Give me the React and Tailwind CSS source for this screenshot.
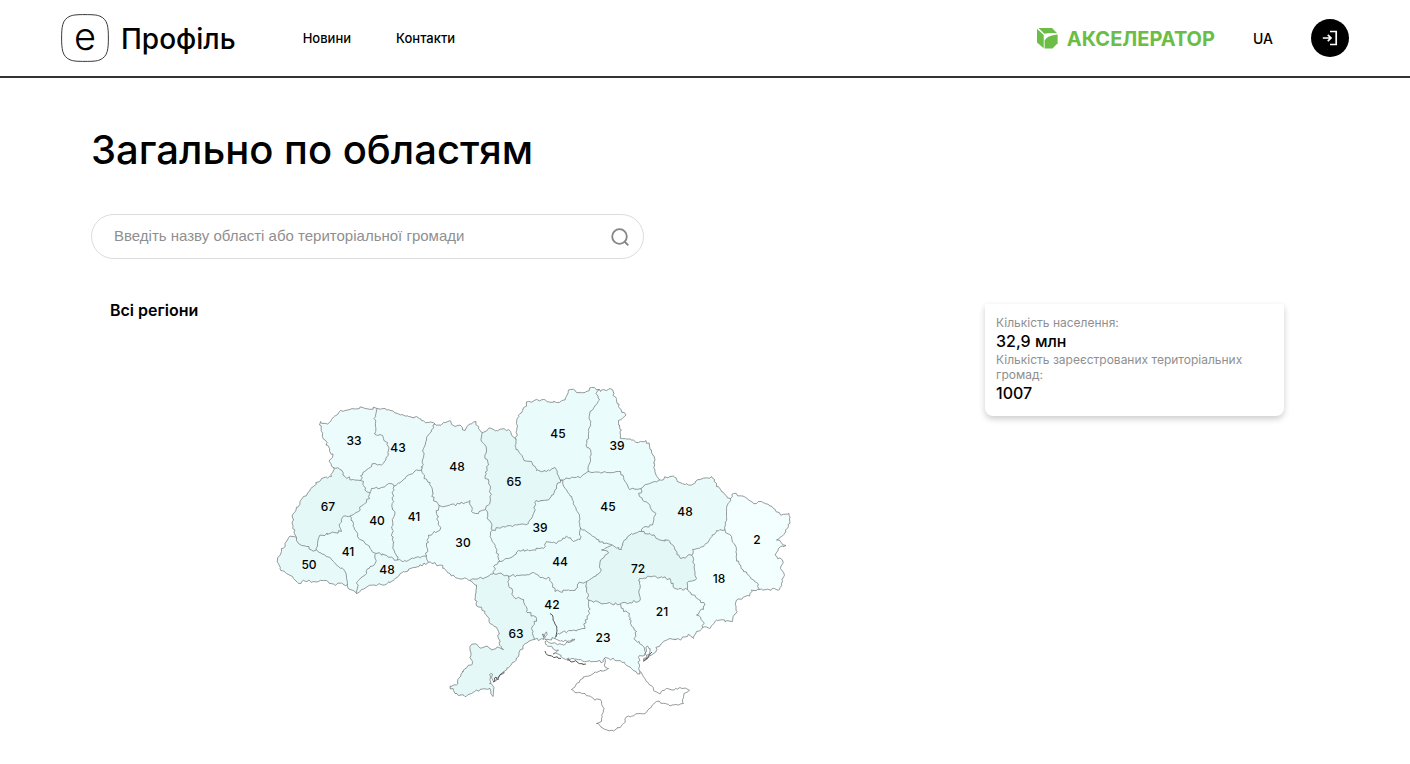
import React from "react";

const arcs = {
  volOut: "377,408.5 363,407.5 350,409.5 340.5,410.5 338,414 331.5,419.5 327.5,424 320.5,421.5 319.5,425 321.5,431.5 325,440 329.5,448.5 332.5,457.5 329.5,460 333.5,467.5",
  volLvi: "333.5,467.5 340,469.5 345,476.5 353.5,479.5 360.5,480.5",
  volRiv: "377,408.5 374,418.5 375.5,426.5 374.5,434 380,434.5 383.5,438.5 387.5,442.5 388.5,450 386,458 381.5,465 375,463.5 368.5,468.5 362.5,475 360.5,480.5",
  rivOut: "377,408.5 386.5,410 398.5,414 408.5,416.5 416.5,416.5 421.5,420.5 428.5,422.5 435,424",
  rivZhy: "435,424 431.5,430 426.5,440 423.5,448.5 422.5,460 421.5,470",
  rivKhm: "421.5,470 416.5,470 408.5,475 401.5,481.5 394,486",
  rivTer: "394,486 390,483.5 381.5,487.5 371.5,488.5 370,493",
  rivLvi: "360.5,480.5 363.5,481.5 365,490 370,493",
  lviTer: "370,493 369.5,498.5 361.5,506 358.5,511.5 350,516",
  lviIva: "350,516 343.5,516 339.5,526.5 341.5,531.5 330,533.5 320,535 317.5,543.5 316.5,550",
  lviOut: "333.5,467.5 331.5,476.5 321.5,478.5 313.5,486.5 303.5,496.5 293.5,513.5 292.5,521.5 294,532 296.5,537.5",
  lviZak: "296.5,537.5 298.5,543.5 306.5,546.5 311.5,550 316.5,550",
  zakOut: "296.5,537.5 290,536 285,543.5 281.5,551.5 277.5,560 280,568.5 286.5,573.5 295,580 298.5,583.5 303.5,580 313.5,581.5 323.5,580.5 333.5,584 347.5,584.5",
  zakIva: "316.5,550 320,552.5 326.5,556.5 333.5,561.5 338.5,566.5 345,571.5 346.5,578.5 347.5,584.5",
  ivaOut: "347.5,584.5 350,589.5 356.5,593.5",
  ivaChv: "356.5,593.5 357.5,581.5 366.5,573.5 370,566.5 375,563.5 376,553.5",
  ivaTer: "350,516 353.5,523.5 357.5,536.5 365,543.5 370,548.5 376,553.5",
  terChv: "376,553.5 385,555 393.5,558.5 397.5,560",
  khmTer: "394,486 392.5,500 394,516.5 392,533.5 394,550 397.5,560",
  chvKhm: "397.5,560 403.5,561.5 413.5,558.5 426.5,556",
  chvOut: "356.5,593.5 361.5,589.5 373.5,585 386.5,584 395,578.5 403.5,571.5 415,567.5 428.5,562.5",
  chvVin: "426.5,556 428.5,562.5",
  khmZhy: "421.5,470 424,478.5 430,482.5 432.5,490 433.5,500 439,505.5",
  khmVin: "439,505.5 436.5,513.5 438.5,521.5 440,530 428.5,535 426.5,546.5 426.5,556",
  zhyOut: "435,424 440,425 450,420.5 455,426.5 460,425 465,430.5 470,424 476,421.5 478.5,428.5 482.5,432.5",
  zhyKyi: "482.5,432.5 481.5,441.5 486.5,450 485,458.5 488.5,465 485,476.5 490.5,486.5 490.5,500 485.5,509.5",
  zhyVin: "439,505.5 446.5,506 460,504 470,500.5 471.5,511.5 478.5,513.5 485.5,509.5",
  vinKyi: "485.5,509.5 488.5,520 492.5,530",
  kyiOut: "482.5,432.5 488.5,428.5 496.5,430.5 508.5,429.5 511.5,435 516,439.5",
  kyiChe: "516,439.5 516,449.5 520,453.5 524,460.5 531.5,461.5 536.5,470.5 546.5,471.5 555,467.5 560.5,480",
  kyiChk: "492.5,530 503.5,526.5 516.5,525 528.5,523.5 533.5,513.5 536,500.5 548.5,500 555,490 560.5,480",
  vinChk: "492.5,530 490,536.5 495,546.5 500.5,561.5",
  vinKir: "500.5,561.5 495,565 493.5,573.5",
  chkKir: "500.5,561.5 508.5,558.5 518.5,550.5 533.5,550 543.5,548.5 546.5,541.5 556.5,543.5 566.5,536 573.5,541.5 580,539.5 580.5,528",
  chkPol: "560.5,480 566.5,490 573.5,501.5 579.5,516.5 580.5,528",
  cheOut: "516,439.5 516.5,423.5 520,413.5 528.5,401.5 543.5,399.5 556.5,402.5 565,400 568.5,390 585,392.5 591.5,387.5 599.5,389.5",
  cheSum: "599.5,389.5 596,393.5 599.5,400 590,411.5 590.5,423.5 588.5,433.5 586,445 590.5,450 588.5,471.5",
  chePol: "560.5,480 573.5,477.5 581.5,476.5 588.5,471.5",
  sumOut: "599.5,389.5 600.5,391.5 610,388.5 616.5,398.5 618.5,406.5 626,415 618.5,420.5 621.5,430 620.5,438.5 631.5,440 638.5,442.5 646,440.5 651.5,450 655,460 655,470 659.5,480",
  sumPol: "588.5,471.5 606.5,472.5 620.5,471.5 625,481.5 629.5,489.5 641,488.5",
  sumKha: "641,488.5 648.5,484 659.5,480",
  polKha: "641,488.5 639.5,496.5 648.5,503.5 656,513.5 652.5,525 643.5,527.5 641.5,531.5",
  polDni: "641.5,531.5 631.5,533.5 623.5,541.5 621.5,549.5 612,545",
  polKir: "580.5,528 593.5,536.5 603.5,543.5 612,545",
  kirDni: "612,545 601.5,550 608.5,553 600.5,560 600.5,571.5 591.5,578.5 586.5,581.5",
  kirMyk: "586.5,581.5 578.5,583.5 575,590.5 555,591.5 550,578.5 540,577.5 533.5,572.5 523.5,575 508.5,576",
  kirOde: "508.5,576 498.5,573.5 493.5,573.5",
  mykOde: "508.5,576 508.5,583.5 513.5,596.5 523.5,599.5 526.5,611.5 536.5,618.5 531.5,628.5 534,639.5",
  vinOde: "493.5,573.5 485,577.5 470,580.5",
  vinOut: "428.5,562.5 440,565 450,573.5 458.5,578.5 466.5,578.5 470,580.5",
  odeOut: "470,580.5 476.5,585 476,603.5 485,611.5 490,623.5 498.5,631.5 499.5,645 503.5,649.5 497,647 491.5,650 487,646 480,648 476.5,644 470,646.5 471.5,665 465,668.5 458.5,678.5 456.5,685 450,686 455,693.5 465,696.5 480,689.5 490,688.5 493,696.5 494,687.5 489.5,683.5 491,673.5 493.5,681.5 506.5,670 518.5,656.5 523.5,645 534,639.5",
  mykOut: "534,639.5 543.5,639.5 542,634 544,637 546.5,632 545,639.5 555,638.5",
  mykKhe: "555,638.5 558.5,633.5 573.5,630 585,628.5 585,620 589.5,613.5 588.5,600",
  mykDni: "586.5,581.5 586.5,590 588.5,600",
  dniKhe: "588.5,600 606.5,603.5 620.5,604",
  dniZap: "620.5,604 640,600.5 640,588.5 639.5,578.5 650,576.5 670,578.5 675,588.5 687.5,589.5",
  dniDon: "687.5,589.5 688.5,581.5 696.5,578.5 695,565 691.5,555",
  dniKha: "641.5,531.5 650,533.5 660,540 670,541.5 675,550 680.5,558.5 691.5,555",
  khaDon: "691.5,555 692.5,549.5 703.5,546.5 710,538.5 716.5,530.5 725,530",
  khaLuh: "725,530 726.5,516.5 726.5,508.5 730.5,498.5",
  khaOut: "659.5,480 670,476.5 675,477.5 680,482.5 688.5,485 700,479.5 711.5,476.5 716.5,483.5 721.5,491.5 730.5,498.5",
  luhOut: "730.5,498.5 733.5,493.5 741.5,496 756.5,503.5 761.5,501.5 773.5,508.5 781.5,515 789,513.5 788.5,526.5 781.5,536.5 776.5,540 786,545.5 778.5,548.5 775,555 782.5,560 780.5,568.5 784,573.5 779.5,589.5 759.5,589.5",
  luhDon: "725,530 731.5,536.5 735,545 736.5,558.5 743.5,571.5 750,576.5 756.5,582.5 759.5,589.5",
  donOut: "759.5,589.5 751.5,590 749.5,596 736.5,600 736,613.5 732.5,621.5 716.5,620 709.5,628.5 702.5,627.5",
  donZap: "687.5,589.5 693.5,595 705,605 696.5,615 704,623.5 702.5,627.5",
  zapOut: "702.5,627.5 696.5,631.5 693.5,638.5 688.5,634 680,640 670,638.5 660,645 651.5,655 643.5,661.5 650,651.5 647.5,646 645,655",
  zapKhe: "620.5,604 623.5,611.5 629.5,613.5 630.5,623.5 636.5,631.5 635,640 643.5,646.5 645,655",
  kheOut: "645,655 638.5,657.5 639.5,666.5 640,674 628.5,666.5 620,660.5 605,657.5 603.5,661.5 593.5,661.5 586.5,661.5 563.5,658.5 558,654 553,654 558.5,650 546.5,645 545,641.5 563.5,645 575,639.5 563.5,641.5 555,638.5",
  crimea: "604,658 605,667 608.5,668.5 593.5,673.5 580,680 571.5,689.5 575,692.5 585,693.5 593.5,698.5 601.5,701.5 603.5,710 601.5,721.5 596.5,723.5 605,729.5 615,730 623.5,723.5 628.5,716 645,713.5 656.5,701.5 670,706 683.5,703.5 684,693.5 689.5,690 680,687.5 672,690 666.5,688.5 660,694 655,691.5 646.5,681.5 640,671.5",
};

const inlets = [
  "550,613.5 553,620 555,624 557,630 556,637",
  "545,651 546,653.5 552,656 561,658.5",
  "567,660 577,662 586,664",
  "493,682 496,677 498,680 501,674 504,672",
  "644,661 648,658 652,652",
];

const regions = [
  { value: 33, x: 354, y: 441, fill: "#ecfcfc", ring: "volLvi volRiv volOut" },
  { value: 43, x: 398, y: 448, fill: "#ebfbfb", ring: "volRiv rivLvi rivTer rivKhm rivZhy rivOut" },
  { value: 48, x: 457, y: 467, fill: "#eafafa", ring: "rivZhy khmZhy zhyVin zhyKyi zhyOut" },
  { value: 65, x: 514, y: 482, fill: "#e4f8f7", ring: "zhyKyi vinKyi kyiChk kyiChe kyiOut" },
  { value: 45, x: 558, y: 434, fill: "#eafbfb", ring: "kyiChe chePol cheSum cheOut" },
  { value: 39, x: 617, y: 446, fill: "#ebfcfc", ring: "cheSum sumPol sumKha sumOut" },
  { value: 67, x: 328, y: 507, fill: "#e3f8f7", ring: "volLvi rivLvi lviTer lviIva lviZak lviOut" },
  { value: 40, x: 377, y: 521, fill: "#ebfcfc", ring: "rivTer lviTer ivaTer terChv khmTer" },
  { value: 41, x: 414, y: 517, fill: "#ebfcfc", ring: "rivKhm khmTer chvKhm khmVin khmZhy" },
  { value: 30, x: 463, y: 543, fill: "#edfdfd", ring: "khmVin chvVin vinOut vinOde vinKir vinChk vinKyi zhyVin" },
  { value: 39, x: 540, y: 528, fill: "#ebfcfc", ring: "vinChk chkKir chkPol kyiChk" },
  { value: 45, x: 608, y: 507, fill: "#eafbfb", ring: "chkPol polKir polDni polKha sumPol chePol" },
  { value: 48, x: 685, y: 512, fill: "#e9fafa", ring: "sumKha khaOut khaLuh khaDon dniKha polKha" },
  { value: 2, x: 757, y: 540, fill: "#f3fefe", ring: "luhOut luhDon khaLuh" },
  { value: 50, x: 309, y: 565, fill: "#e8f9f9", ring: "lviZak zakIva zakOut" },
  { value: 41, x: 348, y: 552, fill: "#ebfcfc", ring: "ivaTer ivaChv ivaOut zakIva lviIva" },
  { value: 48, x: 387, y: 570, fill: "#e9fafa", ring: "terChv chvKhm chvVin chvOut ivaChv" },
  { value: 44, x: 560, y: 562, fill: "#eafbfb", ring: "chkKir polKir kirDni kirMyk kirOde vinKir" },
  { value: 72, x: 638, y: 569, fill: "#e2f7f6", ring: "polDni kirDni mykDni dniKhe dniZap dniDon dniKha" },
  { value: 18, x: 719, y: 579, fill: "#f0fefe", ring: "khaDon luhDon donOut donZap dniDon" },
  { value: 42, x: 552, y: 605, fill: "#ebfcfc", ring: "kirMyk mykOde mykOut mykKhe mykDni" },
  { value: 21, x: 662, y: 612, fill: "#effdfd", ring: "dniZap donZap zapOut zapKhe" },
  { value: 63, x: 516, y: 634, fill: "#e5f8f8", ring: "vinOde odeOut mykOde kirOde" },
  { value: 23, x: 603, y: 638, fill: "#eefdfd", ring: "dniKhe zapKhe kheOut mykKhe" },
];

// Subdivide a polyline and nudge the inner points so borders read as natural ones.
function roughen(text, seed) {
  let state = seed * 7919 + 17;
  const next = () => {
    state = (state * 1103515245 + 12345) % 2147483648;
    return state / 2147483648 - 0.5;
  };
  const pts = text.split(" ").map((p) => p.split(",").map(Number));
  const out = [pts[0]];
  for (let i = 1; i < pts.length; i++) {
    const [ax, ay] = pts[i - 1];
    const [bx, by] = pts[i];
    const n = Math.max(1, Math.round(Math.hypot(bx - ax, by - ay) / 2.2));
    for (let k = 1; k < n; k++) {
      const t = k / n;
      out.push([ax + (bx - ax) * t + next() * 2.6, ay + (by - ay) * t + next() * 2.6]);
    }
    out.push([bx, by]);
  }
  return out;
}

const lines = Object.fromEntries(Object.entries(arcs).map(([k, v], i) => [k, roughen(v, i + 1)]));
const toPath = (pts) => "M" + pts.map(([x, y]) => x.toFixed(1) + " " + y.toFixed(1)).join("L");

// Chain the arcs of a ring end to end, turning each to meet the one before.
function ringPath(ring) {
  const parts = ring.split(" ").map((n) => lines[n]);
  const near = (a, b) => Math.hypot(a[0] - b[0], a[1] - b[1]) < 0.1;
  let pts = parts.shift().slice();
  while (parts.length) {
    const end = pts[pts.length - 1];
    const i = parts.findIndex((p) => near(p[0], end) || near(p[p.length - 1], end));
    if (i < 0) break;
    const p = parts.splice(i, 1)[0];
    pts = pts.concat(near(p[0], end) ? p : p.slice().reverse());
  }
  return toPath(pts) + "Z";
}

function RegionMap() {
  return (
    <svg viewBox="264 380 540 360" className="h-auto w-full" role="img" aria-label="Всі регіони">
      {regions.map((r, i) => (
        <path key={i} d={ringPath(r.ring)} fill={r.fill} />
      ))}
      <g fill="none" stroke="#6a7070" strokeWidth="0.7" strokeLinejoin="round">
        {Object.entries(lines).map(([k, pts]) => (
          <path key={k} d={toPath(pts)} />
        ))}
        {inlets.map((t, i) => (
          <path key={i} d={toPath(roughen(t, i + 90))} stroke="#444" strokeWidth="0.9" />
        ))}
      </g>
      <g textAnchor="middle" className="fill-black text-[12px] font-medium">
        {regions.map((r, i) => (
          <text key={i} x={r.x} y={r.y + 4}>{r.value}</text>
        ))}
      </g>
    </svg>
  );
}

function Header() {
  return (
    <header className="flex h-[78px] items-center border-b-2 border-[#333] px-[61px]">
      <a href="#" className="flex items-center gap-3">
        <span className="grid size-12 place-items-center">
          <svg width="48" height="48" viewBox="0 0 48 48" className="col-start-1 row-start-1" aria-hidden="true">
            <path d="M24 .6C31 .6 36 .8 39 2.200C43 4 45 6.500 46.200 10.500C47.200 14 47.400 19 47.400 24S47.200 34 46.200 37.500C45 41.500 43 44 39 45.800C36 47.200 31 47.400 24 47.400S12 47.200 9 45.800C5 44 3 41.500 1.800 37.500C.8 34 .6 29 .6 24S.8 14 1.800 10.500C3 6.500 5 4 9 2.200C12 .8 17 .6 24 .6Z" fill="none" stroke="#222" strokeWidth="0.9" />
          </svg>
          <span className="col-start-1 row-start-1 pb-1 text-[38px] font-light leading-[44px]">е</span>
        </span>
        <span className="pt-0.5 text-[28px] font-medium leading-8">Профіль</span>
      </a>
      <nav className="ml-[67px] flex gap-[45px] pt-0.5 text-[13px] font-medium">
        <a href="#news">Новини</a>
        <a href="#contacts">Контакти</a>
      </nav>
      <a href="#accelerator" className="ml-auto flex items-center gap-[9px] text-[#6bbd45]">
        <svg width="21" height="21" viewBox="0 0 21 21" fill="currentColor" aria-hidden="true">
          <path d="M1.500 0H15L20.200 5.300Q12 4.700 7.400 5.800Z" />
          <path d="M0 .8 6.700 7V20.200L0 14.500Z" />
          <path d="M20.600 6.500V15.200L15.500 20.500H7.600V12.500Q10 7.500 20.600 6.500Z" />
        </svg>
        <span className="pt-0.5 text-[20px] font-bold leading-6">АКСЕЛЕРАТОР</span>
      </a>
      <button type="button" className="ml-[38px] pt-0.5 text-sm font-medium">UA</button>
      <button type="button" aria-label="Увійти" className="ml-[38px] flex size-[38px] items-center justify-center rounded-full bg-black text-white">
        <svg width="16" height="16" viewBox="0 0 16 16" fill="none" stroke="currentColor" strokeWidth="1.700" aria-hidden="true">
          <path d="M8 1.500H14.200V14.500H8M.8 8H9M5.800 4.800 9 8 5.800 11.200" />
        </svg>
      </button>
    </header>
  );
}

export default function App() {
  return (
    <div className="min-h-screen bg-white font-['Inter',sans-serif] text-black">
      <Header />
      <main className="px-[91px] pt-12">
        <h1 className="text-[40px] font-medium leading-[48px]">Загально по областям</h1>
        <label className="mt-10 flex h-[45px] w-full max-w-[553px] items-center rounded-full border border-[#dcdcdc] pl-[22px] pr-[14px]">
          <input
            type="text"
            aria-label="Пошук"
            placeholder="Введіть назву області або територіальної громади"
            className="min-w-0 flex-1 bg-transparent font-['Liberation_Sans',sans-serif] text-[15px] outline-none placeholder:text-[#8f8f8f]"
          />
          <svg width="18" height="18" viewBox="0 0 18 18" fill="none" stroke="#858585" strokeWidth="1.800" aria-hidden="true">
            <circle cx="8.500" cy="8.500" r="7.300" />
            <path d="m13.500 13.500 3.800 3.800" />
          </svg>
        </label>
        <section className="mt-[45px] flex items-start justify-between pl-[19px] pr-[35px]">
          <div className="min-w-0 flex-1">
            <h2 className="text-base font-semibold leading-3">Всі регіони</h2>
            <div className="ml-[154px] mt-16 max-w-[540px]">
              <RegionMap />
            </div>
          </div>
          <dl className="w-[299px] rounded-b-lg px-[11px] pb-3 pt-[11px] text-[12px] leading-[15px] shadow-[0_3px_6px_rgba(0,0,0,0.2)]">
            <dt className="text-[#8f8f8f]">Кількість населення:</dt>
            <dd className="text-base font-medium leading-[22px]">32,9 млн</dd>
            <dt className="text-[#8f8f8f]">Кількість зареєстрованих територіальних громад:</dt>
            <dd className="text-base font-medium leading-[22px]">1007</dd>
          </dl>
        </section>
      </main>
    </div>
  );
}
